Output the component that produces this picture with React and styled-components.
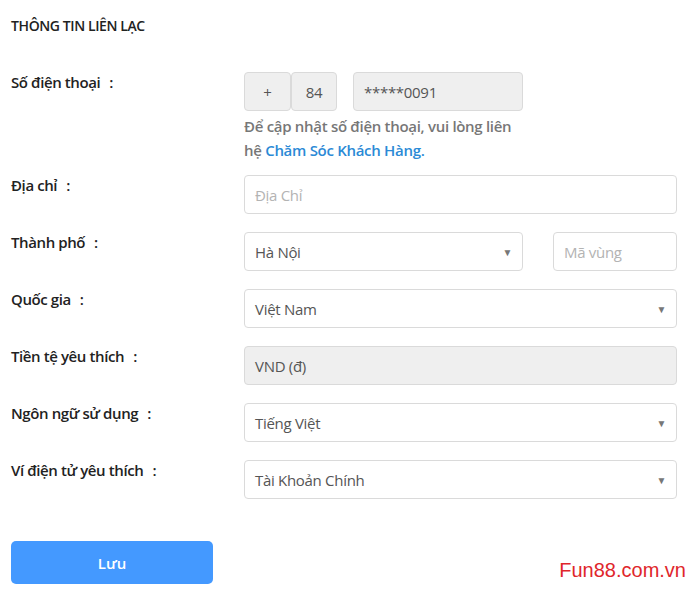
import React from "react";
import styled, { createGlobalStyle } from "styled-components";

const GlobalStyle = createGlobalStyle`
  body {
    margin: 0;
    background: #fff;
    font-family: "Open Sans", "Liberation Sans", sans-serif;
  }
`;

const Page = styled.div`
  position: relative;
  width: 688px;
  height: 605px;
  padding: 16px 0 0 11px;
  box-sizing: border-box;
  overflow: hidden;
`;

const Title = styled.h2`
  margin: 0 0 36px;
  font-size: 14px;
  font-weight: 600;
  color: #222;
  letter-spacing: -0.4px;
  line-height: 20px;
`;

const Row = styled.div`
  display: grid;
  grid-template-columns: 233px 433px;
  margin-bottom: ${(p) => p.$gap || 18}px;
`;

const Label = styled.div`
  font-size: 15px;
  font-weight: 600;
  color: #222;
  letter-spacing: -0.4px;
  line-height: 21px;

  span {
    margin-left: 9px;
  }
`;

const FieldLine = styled.div`
  display: flex;
  align-items: center;
`;

const Box = styled.div`
  height: 39px;
  box-sizing: border-box;
  border: 1px solid #dadada;
  border-radius: 4px;
  background: ${(p) => (p.$gray ? "#efefef" : "#fff")};
  display: flex;
  align-items: center;
  justify-content: ${(p) => (p.$center ? "center" : "space-between")};
  padding: ${(p) => (p.$center ? "0" : "0 10px")};
  width: ${(p) => (p.$w ? `${p.$w}px` : "100%")};
  margin-left: ${(p) => p.$ml || 0}px;
  font-size: 15px;
  color: ${(p) => (p.$placeholder ? "#b3b3b3" : "#555")};
  letter-spacing: -0.3px;
`;

const Arrow = styled.span`
  font-size: 10px;
  color: #777;
`;

const Help = styled.p`
  margin: 3px 0 0;
  font-size: 15px;
  line-height: 24px;
  color: #777;
  letter-spacing: -0.3px;
  font-weight: 600;
  width: 274px;
`;

const Link = styled.a`
  color: #2b8ad6;
  text-decoration: none;
`;

const SaveButton = styled.button`
  margin-top: 24px;
  width: 202px;
  height: 43px;
  border: none;
  border-radius: 5px;
  background: #4499ff;
  color: #fff;
  font-family: "Open Sans", "Liberation Sans", sans-serif;
  font-size: 15px;
  font-weight: 600;
`;

const Watermark = styled.div`
  position: absolute;
  right: 2px;
  bottom: 23px;
  font-family: "Liberation Sans", Arial, sans-serif;
  font-size: 20px;
  color: #e0262b;
`;

const SelectBox = ({ value }) => (
  <Box>
    {value}
    <Arrow>▼</Arrow>
  </Box>
);

export default function App() {
  return (
    <>
      <GlobalStyle />
      <Page>
        <Title>THÔNG TIN LIÊN LẠC</Title>

        <Row $gap={13}>
          <Label>
            Số điện thoại<span>:</span>
          </Label>
          <div>
            <FieldLine>
              <Box $gray $center $w={47}>+</Box>
              <Box $gray $center $w={46}>84</Box>
              <Box $gray $w={170} $ml={16}>*****0091</Box>
            </FieldLine>
            <Help>
              Để cập nhật số điện thoại, vui lòng liên hệ{" "}
              <Link href="#">Chăm Sóc Khách Hàng.</Link>
            </Help>
          </div>
        </Row>

        <Row>
          <Label>
            Địa chỉ<span>:</span>
          </Label>
          <Box $placeholder>Địa Chỉ</Box>
        </Row>

        <Row>
          <Label>
            Thành phố<span>:</span>
          </Label>
          <FieldLine>
            <Box $w={279}>
              Hà Nội
              <Arrow>▼</Arrow>
            </Box>
            <Box $w={124} $ml={30} $placeholder>Mã vùng</Box>
          </FieldLine>
        </Row>

        <Row>
          <Label>
            Quốc gia<span>:</span>
          </Label>
          <SelectBox value="Việt Nam" />
        </Row>

        <Row>
          <Label>
            Tiền tệ yêu thích<span>:</span>
          </Label>
          <Box $gray>VND (đ)</Box>
        </Row>

        <Row>
          <Label>
            Ngôn ngữ sử dụng<span>:</span>
          </Label>
          <SelectBox value="Tiếng Việt" />
        </Row>

        <Row>
          <Label>
            Ví điện tử yêu thích<span>:</span>
          </Label>
          <SelectBox value="Tài Khoản Chính" />
        </Row>

        <SaveButton>Lưu</SaveButton>

        <Watermark>Fun88.com.vn</Watermark>
      </Page>
    </>
  );
}
